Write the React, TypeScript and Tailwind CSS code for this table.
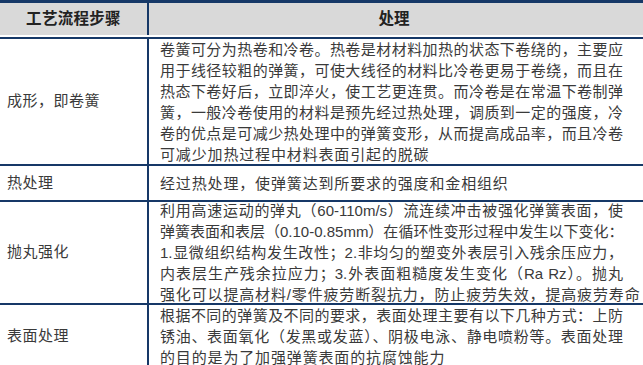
const rows = [
  {
    step: "成形，即卷簧",
    h: "h-[125px]",
    lines: [
      "卷簧可分为热卷和冷卷。热卷是材材料加热的状态下卷绕的，主要应",
      "用于线径较粗的弹簧，可使大线径的材料比冷卷更易于卷绕，而且在",
      "热态下卷好后，立即淬火，使工艺更连贯。而冷卷是在常温下卷制弹",
      "簧，一般冷卷使用的材料是预先经过热处理，调质到一定的强度，冷",
      "卷的优点是可减少热处理中的弹簧变形，从而提高成品率，而且冷卷",
      "可减少加热过程中材料表面引起的脱碳",
    ],
  },
  {
    step: "热处理",
    h: "h-[34px]",
    lines: ["经过热处理，使弹簧达到所要求的强度和金相组织"],
  },
  {
    step: "抛丸强化",
    h: "h-[101px]",
    lines: [
      "利用高速运动的弹丸（60-110m/s）流连续冲击被强化弹簧表面，使",
      "弹簧表面和表层（0.10-0.85mm）在循环性变形过程中发生以下变化：",
      "1.显微组织结构发生改性；2.非均匀的塑变外表层引入残余压应力，",
      "内表层生产残余拉应力；3.外表面粗糙度发生变化（Ra Rz）。抛丸",
      "强化可以提高材料/零件疲劳断裂抗力，防止疲劳失效，提高疲劳寿命",
    ],
  },
  {
    step: "表面处理",
    h: "h-[62px]",
    lines: [
      "根据不同的弹簧及不同的要求，表面处理主要有以下几种方式：上防",
      "锈油、表面氧化（发黑或发蓝）、阴极电泳、静电喷粉等。表面处理",
      "的目的是为了加强弹簧表面的抗腐蚀能力",
    ],
  },
];

export default function App() {
  return (
    <div
      className="w-[643px] h-[365px] overflow-hidden bg-white text-[#3a3a3a]"
      style={{ fontFamily: '"Liberation Sans", "Noto Sans CJK SC", sans-serif' }}
    >
      <div className="h-[3px] bg-[#163867]" />
      <div className="flex h-[34px] border-b-2 border-white bg-[#d9d9d9] text-[15.5px] font-bold text-[#222]">
        <div className="flex w-[147px] items-center justify-center tracking-[0.3px]">工艺流程步骤</div>
        <div className="w-[2px] bg-[#163867]" />
        <div className="flex flex-1 items-center justify-center pr-[4px]">处理</div>
      </div>
      <div className="h-[2px] bg-[#163867]" />

      {rows.map((row, i) => (
        <div key={row.step}>
          <div className={`flex ${row.h}`}>
            <div className="flex w-[147px] items-center pl-[7px] text-[15px] tracking-[0.5px]">{row.step}</div>
            <div className="w-[2px] shrink-0 bg-[#163867]" />
            <div className="flex w-[474px] flex-col justify-center pl-[11px] text-[15px] leading-[21px]">
              {row.lines.map((line, j) => {
                const last = j === row.lines.length - 1;
                return (
                  <div
                    key={j}
                    className={
                      last
                        ? "whitespace-nowrap tracking-[0.85px]"
                        : "whitespace-nowrap text-justify [text-align-last:justify]"
                    }
                  >
                    {line}
                  </div>
                );
              })}
            </div>
          </div>
          {i < rows.length - 1 ? <div className="h-[2px] bg-[#163867]" /> : null}
        </div>
      ))}
    </div>
  );
}
